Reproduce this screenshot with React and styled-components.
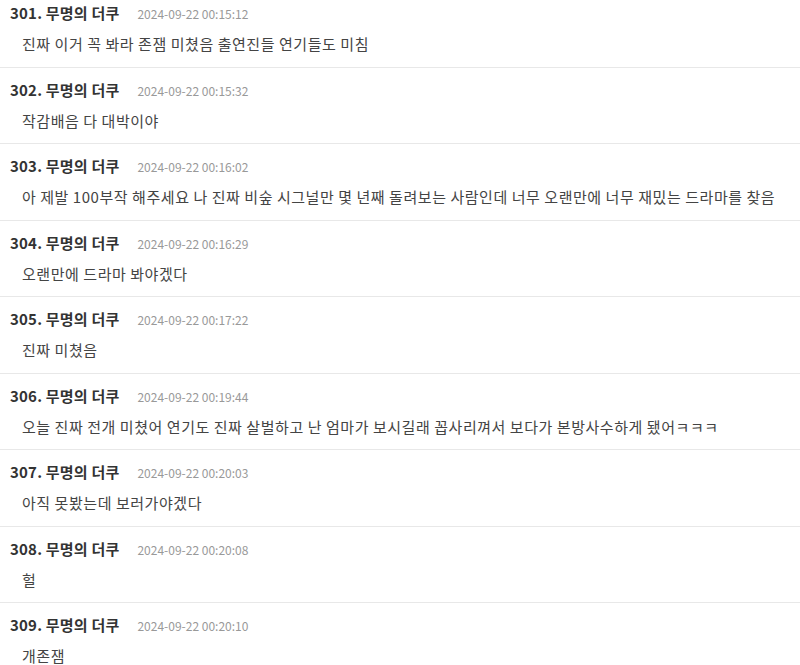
import React from 'react';
import styled, { createGlobalStyle } from 'styled-components';

const GlobalStyle = createGlobalStyle`
  body {
    margin: 0;
    background: #ffffff;
    font-family: "Noto Sans CJK KR", "Noto Sans", sans-serif;
  }
`;

const List = styled.div`
  width: 800px;
  overflow: hidden;
`;

const Row = styled.div`
  padding: ${p => (p.first ? '2px' : '11px')} 10px 10.5px;
  border-bottom: 1px solid #e8e8e8;
`;

const Header = styled.div`
  display: flex;
  align-items: baseline;
  height: 22px;
  line-height: 22px;
`;

const Name = styled.span`
  font-size: 15px;
  font-weight: 700;
  letter-spacing: 0.2px;
  color: #333333;
`;

const Date = styled.span`
  margin-left: 18px;
  font-size: 12px;
  color: #999999;
`;

const Content = styled.div`
  margin-top: 8px;
  padding-left: 12px;
  font-size: 15px;
  letter-spacing: 0.55px;
  line-height: 24px;
  color: #444444;
`;

const comments = [
  { no: 301, date: '2024-09-22 00:15:12', text: '진짜 이거 꼭 봐라 존잼 미쳤음 출연진들 연기들도 미침' },
  { no: 302, date: '2024-09-22 00:15:32', text: '작감배음 다 대박이야' },
  { no: 303, date: '2024-09-22 00:16:02', text: '아 제발 100부작 해주세요 나 진짜 비숲 시그널만 몇 년째 돌려보는 사람인데 너무 오랜만에 너무 재밌는 드라마를 찾음' },
  { no: 304, date: '2024-09-22 00:16:29', text: '오랜만에 드라마 봐야겠다' },
  { no: 305, date: '2024-09-22 00:17:22', text: '진짜 미쳤음' },
  { no: 306, date: '2024-09-22 00:19:44', text: '오늘 진짜 전개 미쳤어 연기도 진짜 살벌하고 난 엄마가 보시길래 꼽사리껴서 보다가 본방사수하게 됐어ㅋㅋㅋ' },
  { no: 307, date: '2024-09-22 00:20:03', text: '아직 못봤는데 보러가야겠다' },
  { no: 308, date: '2024-09-22 00:20:08', text: '헐' },
  { no: 309, date: '2024-09-22 00:20:10', text: '개존잼' },
];

const App = () => (
  <List>
    <GlobalStyle />
    { comments.map((c, index) => (
      <Row key={c.no} first={index === 0}>
        <Header>
          <Name>{ c.no }. 무명의 더쿠</Name>
          <Date>{ c.date }</Date>
        </Header>
        <Content>{ c.text }</Content>
      </Row>
    ))}
  </List>
);

export default App;
